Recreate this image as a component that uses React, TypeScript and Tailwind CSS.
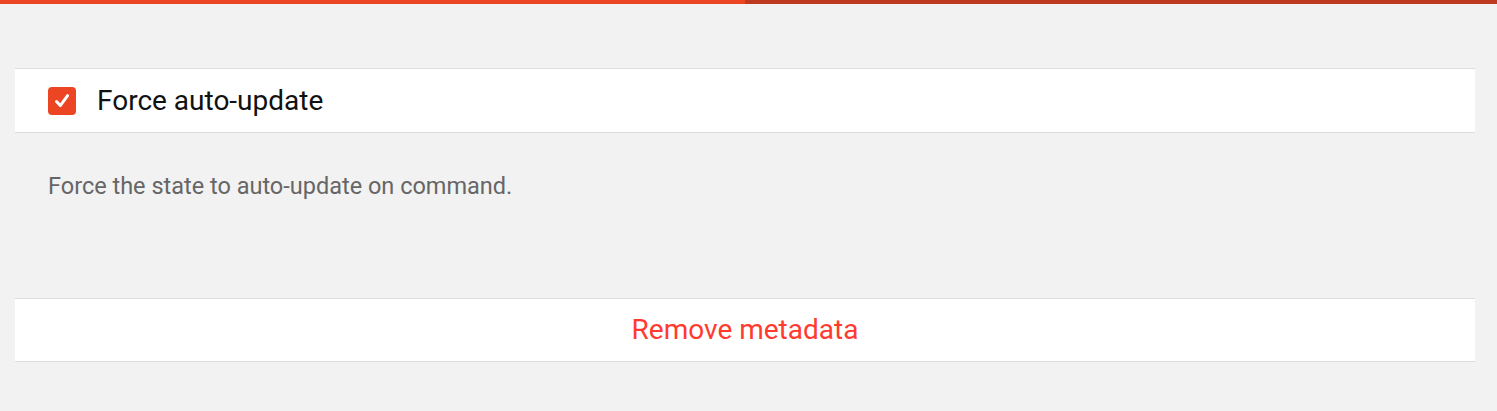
import React from "react";

export default function App() {
  return (
    <div
      className="w-[1497px] h-[411px] bg-[#f2f2f2] overflow-hidden"
      style={{ fontFamily: "Roboto, 'Noto Sans', sans-serif" }}
    >
      <div className="flex h-[4px]">
        <div className="w-[745px] bg-[#eb4524]" />
        <div className="flex-1 bg-[#be391f]" />
      </div>

      <div className="mt-[64px] ml-[15px] w-[1460px] h-[65px] bg-white border-y border-[#dddddd] flex items-center pl-[33px]">
        <div className="w-[28px] h-[28px] rounded-[4px] bg-[#eb4524]">
          <svg width="28" height="28" viewBox="0 0 28 28" fill="none">
            <path
              d="M8.5 14.5 L12.3 18.6 L19.6 8.6"
              stroke="white"
              strokeWidth="3"
              strokeLinecap="round"
              strokeLinejoin="round"
            />
          </svg>
        </div>
        <span className="ml-[21px] text-[28px] text-[#111111] leading-none">Force auto-update</span>
      </div>

      <div className="h-[165px] pl-[48px] pt-[39px]">
        <p className="text-[23.5px] text-[#666666] leading-[28px]">Force the state to auto-update on command.</p>
      </div>

      <div className="ml-[15px] w-[1460px] h-[64px] bg-white border-y border-[#dddddd] flex items-center justify-center">
        <span className="text-[28px] text-[#ff3b30] leading-none">Remove metadata</span>
      </div>
    </div>
  );
}
